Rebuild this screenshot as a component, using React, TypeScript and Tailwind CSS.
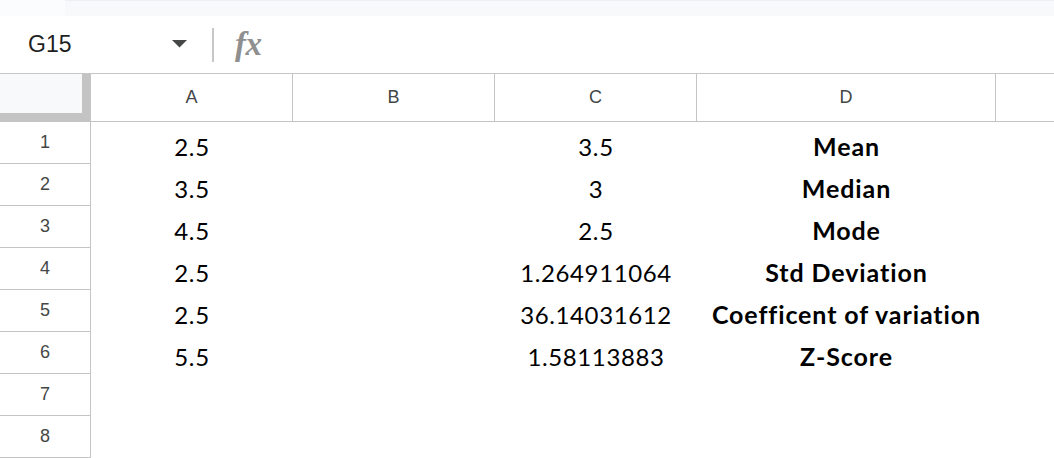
import React from "react";

const rows: [string, string, string][] = [
  ["2.5", "3.5", "Mean"],
  ["3.5", "3", "Median"],
  ["4.5", "2.5", "Mode"],
  ["2.5", "1.264911064", "Std Deviation"],
  ["2.5", "36.14031612", "Coefficent of variation"],
  ["5.5", "1.58113883", "Z-Score"],
  ["", "", ""],
  ["", "", ""],
];

const cellFont = { fontFamily: "Lato, 'Open Sans', sans-serif" } as const;

export default function App() {
  return (
    <div className="w-[1054px] h-[458px] overflow-hidden bg-white" style={{ fontFamily: "'Liberation Sans', Arial, sans-serif" }}>
      {/* top strip */}
      <div className="flex h-[16px]">
        <div className="w-[65px] bg-[#fbfcfe]" />
        <div className="flex-1 bg-[#f8f9fb] border-t border-[#eceff4]" />
      </div>
      {/* formula bar */}
      <div className="flex items-center h-[58px] border-b border-[#c4c7c5] bg-white">
        <div className="w-[172px] pl-[28px] text-[23px] text-[#1f1f1f] leading-none">G15</div>
        <svg width="15" height="8" viewBox="0 0 15 8" className="mb-[2px]">
          <path d="M0 0 L15 0 L7.5 7.5 Z" fill="#444746" />
        </svg>
        <div className="ml-[25px] w-[2px] h-[34px] bg-[#c7c7c7]" />
        <div
          className="ml-[21px] text-[33px] italic font-bold text-[#8f8f8f] leading-none tracking-[-0.5px]"
          style={{ fontFamily: "'Liberation Serif', 'DejaVu Serif', serif" }}
        >
          fx
        </div>
      </div>
      {/* column header */}
      <div className="flex h-[48px]">
        <div className="w-[91px] h-[48px] flex flex-col">
          <div className="flex flex-1">
            <div className="w-[82px] bg-[#f8f9fa]" />
            <div className="w-[9px] bg-[#c4c4c4]" />
          </div>
          <div className="h-[9px] bg-[#c4c4c4]" />
        </div>
        <div className="w-[202px] h-[48px] flex items-center justify-center border-b border-r border-[#c4c4c4] text-[18px] text-[#444746]">A</div>
        <div className="w-[202px] h-[48px] flex items-center justify-center border-b border-r border-[#c4c4c4] text-[18px] text-[#444746]">B</div>
        <div className="w-[202px] h-[48px] flex items-center justify-center border-b border-r border-[#c4c4c4] text-[18px] text-[#444746]">C</div>
        <div className="w-[299px] h-[48px] flex items-center justify-center border-b border-r border-[#c4c4c4] text-[18px] text-[#444746]">D</div>
        <div className="flex-1 h-[48px] border-b border-[#c4c4c4]" />
      </div>
      {/* rows */}
      {rows.map((r, i) => (
        <div key={i} className="flex h-[42px]">
          <div className="w-[91px] h-[42px] flex items-center justify-center border-r border-b border-[#c4c4c4] text-[18px] text-[#444746]">
            {i + 1}
          </div>
          <div className="w-[202px] h-[42px] pt-[8px] text-center text-[24px] leading-[34px] tracking-[0.6px] text-black" style={cellFont}>
            {r[0]}
          </div>
          <div className="w-[202px] h-[42px]" />
          <div className="w-[202px] h-[42px] pt-[8px] text-center text-[24px] leading-[34px] tracking-[0.6px] text-black" style={cellFont}>
            {r[1]}
          </div>
          <div className="w-[299px] h-[42px] pt-[7px] text-center text-[25px] leading-[34px] tracking-[0.9px] font-bold text-black whitespace-nowrap" style={cellFont}>
            {r[2]}
          </div>
        </div>
      ))}
    </div>
  );
}
